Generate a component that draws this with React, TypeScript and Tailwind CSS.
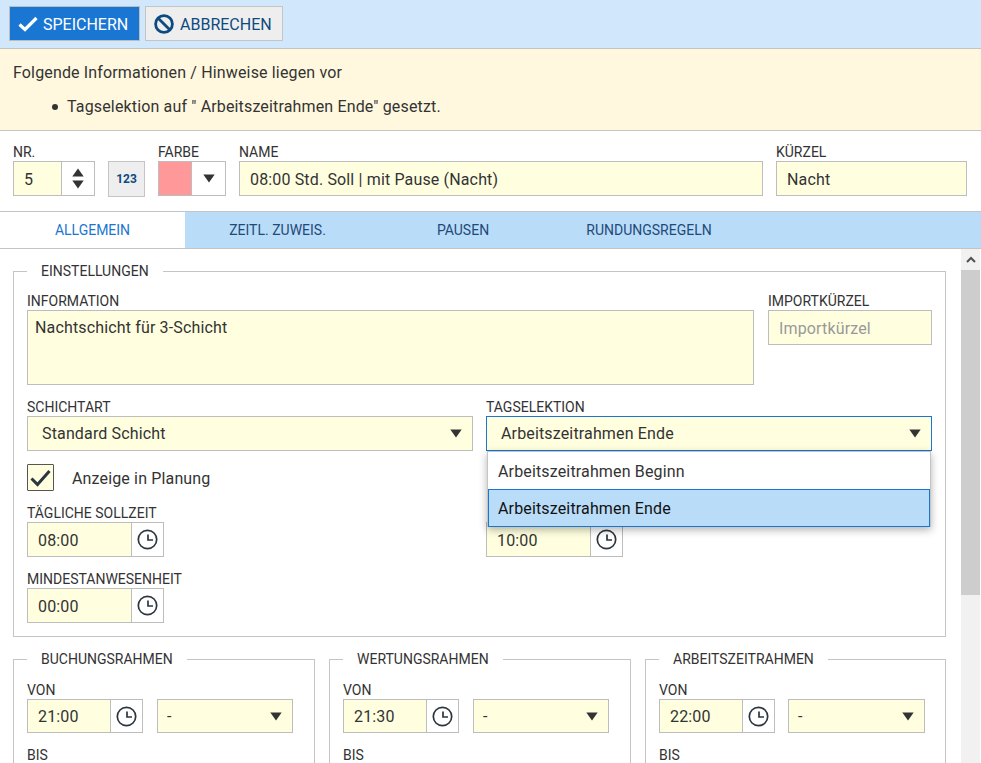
import type { ReactNode } from 'react'

const inputBox = 'border bg-[#ffffe0] text-[16px] tracking-[0.15px] text-[#333] flex items-center'

function Clock() {
  return (
    <svg width="21" height="21" viewBox="0 0 21 21" fill="none" stroke="#2b3640" strokeWidth="1.7">
      <circle cx="10.5" cy="10.5" r="9.2" />
      <path d="M11 5.5v5.5h5" />
    </svg>
  )
}

function Arrow({ up = false }: { up?: boolean }) {
  return (
    <svg width="12" height="9" viewBox="0 0 12 9" fill="#333">
      <polygon points={up ? '6,0.5 11.7,8.5 0.3,8.5' : '0.3,0.5 11.7,0.5 6,8.5'} />
    </svg>
  )
}

function Label({ children }: { children: ReactNode }) {
  return <div className="h-[17px] text-[14px] leading-[17px] text-[#333] whitespace-nowrap">{children}</div>
}

function TimeInput({ value, width = 'w-[137px]', height = 'h-[35px]' }: { value: string; width?: string; height?: string }) {
  return (
    <div className={`flex ${height} ${width} border border-[#bdbdbd] text-[16px] tracking-[0.15px] text-[#333]`}>
      <div className="flex-1 bg-[#ffffe0] border-r border-[#bdbdbd] pl-[10px] pt-[2px] flex items-center">{value}</div>
      <div className="w-[31px] flex items-center justify-center bg-white"><Clock /></div>
    </div>
  )
}

function Select({ value, className, focused }: { value: string; className: string; focused?: boolean }) {
  return (
    <div className={`${inputBox} ${className} justify-between pr-[10px] ${focused ? 'border-[#1976d2]' : 'border-[#bdbdbd]'}`}>
      <span className="pt-[1px]">{value}</span>
      <Arrow />
    </div>
  )
}

function Frame({ title, className, children }: { title: string; className: string; children: ReactNode }) {
  return (
    <fieldset className={`border border-[#c4c4c4] px-[13px] ${className}`}>
      <legend className="px-[14px] h-[20px] text-[14px] leading-[20px] text-[#333]">{title}</legend>
      {children}
    </fieldset>
  )
}

function RangeBox({ title, von, className, gap = 'gap-[14px]', selectWidth = 'w-[136px]' }: { title: string; von: string; className: string; gap?: string; selectWidth?: string }) {
  return (
    <Frame title={title} className={`pt-[13px] pb-[20px] ${className}`}>
      <Label>VON</Label>
      <div className={`flex ${gap}`}>
        <TimeInput value={von} width="w-[116px]" height="h-[34px]" />
        <Select value="-" className={`${selectWidth} h-[34px] pl-[9px]`} />
      </div>
      <div className="mt-[14px]"><Label>BIS</Label></div>
    </Frame>
  )
}

export default function App() {
  return (
    <div className="w-[981px] h-[763px] overflow-hidden flex flex-col bg-white font-['Roboto',sans-serif] text-[#333]">
      {/* Toolbar */}
      <div className="h-[49px] shrink-0 bg-[#d1e7fc] border-b border-[#c4c4c4] pl-[9px] pt-[6px] flex gap-[5px] items-start">
        <button className="w-[131px] h-[35px] bg-[#1976d2] border border-[#bdbdbd] text-white text-[16px] flex items-center pl-[8px] gap-[5px]">
          <svg width="20" height="16" viewBox="0 0 20 16" fill="none" stroke="white" strokeWidth="3.2">
            <path d="M1.5 8.5 7 13.5 18.5 2" />
          </svg>
          <span className="pt-[2px]">SPEICHERN</span>
        </button>
        <button className="w-[138px] h-[35px] bg-[#eeeeee] border border-[#c4c4c4] text-[#0d4a80] text-[16px] flex items-center pl-[8px] gap-[6px]">
          <svg width="20" height="20" viewBox="0 0 20 20" fill="none" stroke="#0d4a80" strokeWidth="2.8">
            <circle cx="10" cy="10" r="8.4" />
            <path d="M4.2 4.2 15.8 15.8" />
          </svg>
          <span className="pt-[2px]">ABBRECHEN</span>
        </button>
      </div>

      {/* Hinweise */}
      <div className="h-[82px] shrink-0 bg-[#fff8de] border-b border-[#c4c4c4] pl-[13px] pt-[13px] text-[16px] leading-[22px] tracking-[0.15px]">
        <div>Folgende Informationen / Hinweise liegen vor</div>
        <div className="mt-[12px] pl-[39px] flex items-center gap-[9px]">
          <span className="w-[6px] h-[6px] rounded-full bg-[#333]" />
          Tagselektion auf " Arbeitszeitrahmen Ende" gesetzt.
        </div>
      </div>

      {/* Kopfzeile */}
      <div className="h-[80px] shrink-0 pl-[13px] pt-[13px] flex gap-[13px]">
        <div>
          <Label>NR.</Label>
          <div className="flex h-[35px] w-[82px] border border-[#bdbdbd]">
            <div className="w-[48px] bg-[#ffffe0] border-r border-[#bdbdbd] pl-[10px] pt-[3px] flex items-center text-[16px]">5</div>
            <div className="flex-1 flex flex-col items-center justify-center gap-[3px]"><Arrow up /><Arrow /></div>
          </div>
        </div>
        <div className="pt-[17px]">
          <div className="w-[37px] h-[36px] bg-[#eeeeee] border border-[#c4c4c4] flex items-center justify-center text-[12px] font-bold text-[#0d4a80]">123</div>
        </div>
        <div>
          <Label>FARBE</Label>
          <div className="flex h-[35px] w-[68px] border border-[#bdbdbd]">
            <div className="w-[33px] bg-[#ff9999] border-r border-[#bdbdbd]" />
            <div className="flex-1 flex items-center justify-center"><Arrow /></div>
          </div>
        </div>
        <div>
          <Label>NAME</Label>
          <div className={`${inputBox} border-[#bdbdbd] w-[524px] h-[35px] pl-[10px] pt-[3px]`}>08:00 Std. Soll | mit Pause (Nacht)</div>
        </div>
        <div>
          <Label>KÜRZEL</Label>
          <div className={`${inputBox} border-[#bdbdbd] w-[191px] h-[35px] pl-[10px] pt-[3px]`}>Nacht</div>
        </div>
      </div>

      {/* Tabs */}
      <div className="h-[38px] shrink-0 bg-[#b9dcf9] border-y border-[#c4c4c4] flex text-[14px] text-[#1f4a78]">
        <div className="w-[185px] bg-white text-[#1976d2] flex items-center justify-center">ALLGEMEIN</div>
        <div className="w-[185px] flex items-center justify-center">ZEITL. ZUWEIS.</div>
        <div className="w-[186px] flex items-center justify-center">PAUSEN</div>
        <div className="w-[186px] flex items-center justify-center">RUNDUNGSREGELN</div>
      </div>

      {/* Inhalt */}
      <div className="flex-1 flex min-h-0">
        <div className="w-[961px] pl-[13px] pt-[12px] overflow-hidden">
          <Frame title="EINSTELLUNGEN" className="w-[933px] pt-[12px] pb-[13px] relative">
            <div className="flex gap-[14px]">
              <div>
                <Label>INFORMATION</Label>
                <div className="w-[727px] h-[75px] border border-[#bdbdbd] bg-[#ffffe0] text-[16px] tracking-[0.15px] pl-[7px] pt-[5px]">Nachtschicht für 3-Schicht</div>
              </div>
              <div>
                <Label>IMPORTKÜRZEL</Label>
                <div className={`${inputBox} border-[#bdbdbd] w-[164px] h-[35px] pl-[10px] pt-[3px] text-[#999]`}>Importkürzel</div>
              </div>
            </div>

            <div className="flex gap-[13px] mt-[14px]">
              <div>
                <Label>SCHICHTART</Label>
                <Select value="Standard Schicht" className="w-[446px] h-[35px] pl-[14px]" />
              </div>
              <div>
                <Label>TAGSELEKTION</Label>
                <Select value="Arbeitszeitrahmen Ende" className="w-[446px] h-[35px] pl-[14px]" focused />
              </div>
            </div>

            <div className="flex items-center gap-[18px] mt-[13px] text-[16px] tracking-[0.15px]">
              <div className="w-[27px] h-[27px] border border-[#555] bg-[#ffffe0] rounded-[1px] flex items-center justify-center">
                <svg width="21" height="18" viewBox="0 0 21 18" fill="none" stroke="#2b3640" strokeWidth="3">
                  <path d="M1.5 9.5 7.5 15.5 19.5 2" />
                </svg>
              </div>
              <span className="pt-[3px]">Anzeige in Planung</span>
            </div>

            <div className="flex gap-[322px] mt-[14px]">
              <div>
                <Label>TÄGLICHE SOLLZEIT</Label>
                <TimeInput value="08:00" />
              </div>
              <div className="pt-[17px]"><TimeInput value="10:00" /></div>
            </div>

            <div className="mt-[14px]">
              <Label>MINDESTANWESENHEIT</Label>
              <TimeInput value="00:00" />
            </div>

            {/* geöffnete Auswahlliste */}
            <div className="absolute left-[473px] top-[170px] w-[444px] h-[76px] bg-white border border-[#c4c4c4] shadow-[0_3px_8px_rgba(0,0,0,0.3)] text-[16px] tracking-[0.15px]">
              <div className="h-[37px] pl-[10px] pt-[2px] flex items-center">Arbeitszeitrahmen Beginn</div>
              <div className="h-[38px] pl-[9px] pt-[2px] flex items-center bg-[#b9dcf9] border border-[#1976d2] text-[#111]">Arbeitszeitrahmen Ende</div>
            </div>
          </Frame>

          <div className="flex gap-[14px] mt-[12px]">
            <RangeBox title="BUCHUNGSRAHMEN" von="21:00" className="w-[302px]" />
            <RangeBox title="WERTUNGSRAHMEN" von="21:30" className="w-[302px]" />
            <RangeBox title="ARBEITSZEITRAHMEN" von="22:00" className="w-[301px]" gap="gap-[13px]" selectWidth="w-[137px]" />
          </div>
        </div>

        {/* Scrollbar */}
        <div className="w-[19px] bg-[#f1f1f1] flex flex-col">
          <div className="h-[21px] flex items-center justify-center">
            <svg width="10" height="7" viewBox="0 0 10 7" fill="none" stroke="#505050" strokeWidth="2">
              <path d="M1 6 5 2 9 6" />
            </svg>
          </div>
          <div className="h-[325px] bg-[#cdcdcd]" />
        </div>
      </div>
    </div>
  )
}
